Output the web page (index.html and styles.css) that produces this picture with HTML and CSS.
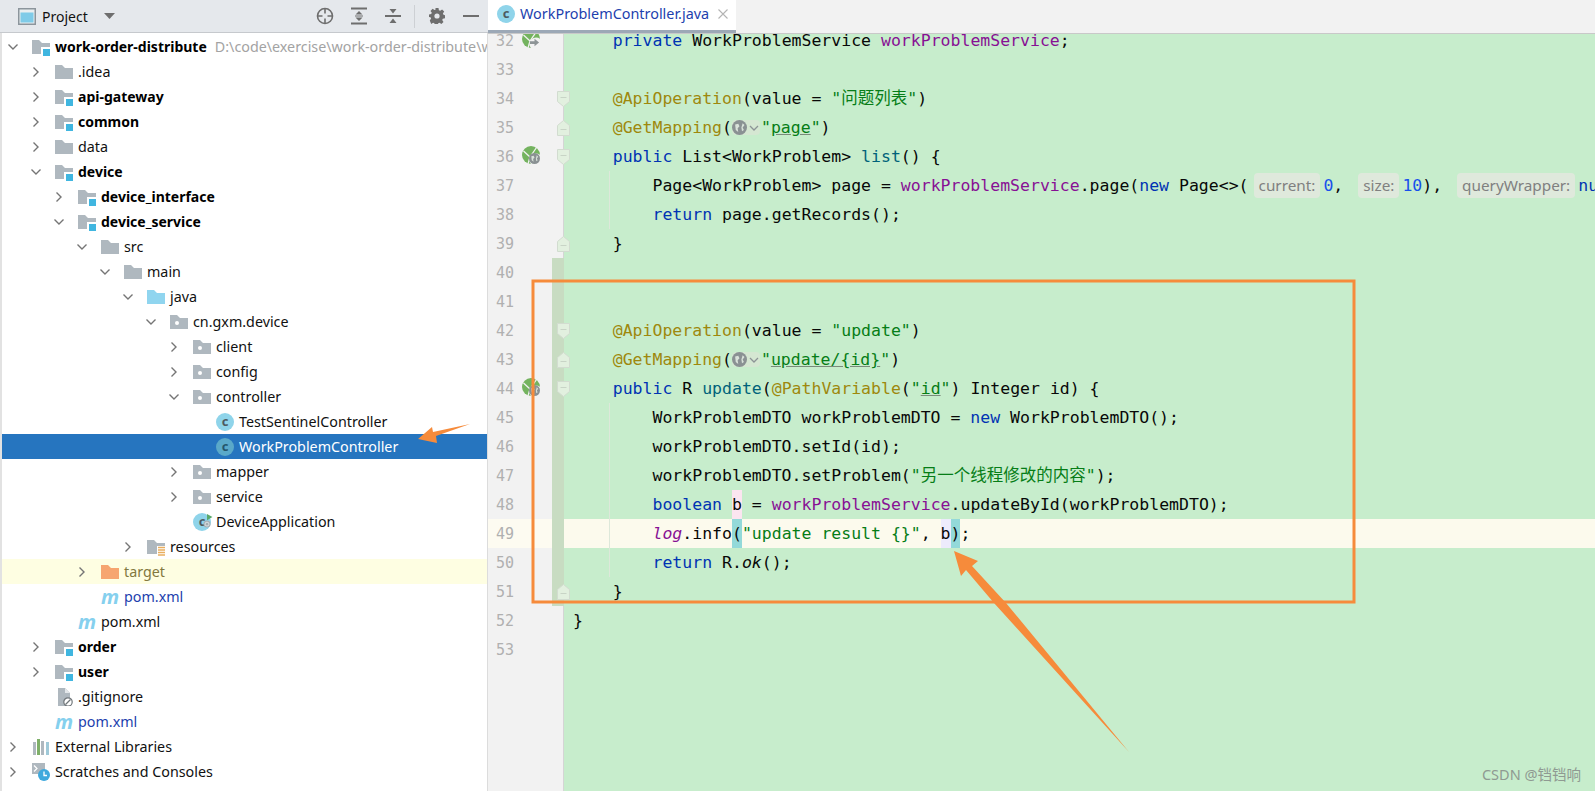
FILE: index.html
```html
<!DOCTYPE html>
<html lang="en">
<head>
    <meta charset="utf-8">
    <title>WorkProblemController.java</title>
    <link rel="stylesheet" href="styles.css">
</head>
<body>
    <!-- shared icons -->
    <svg class="defs" xmlns="http://www.w3.org/2000/svg">
        <symbol id="folder" viewBox="0 0 18 18"><path d="M0 2h7l3 3h8v11H0z" fill="#afb8bf"/></symbol>
        <symbol id="module" viewBox="0 0 18 18"><path d="M0 2h7l3 3h8v11H0z" fill="#afb8bf"/><rect x="9" y="9" width="10" height="10" fill="#fff"/><rect x="11" y="11" width="7" height="7" fill="#40b6e0"/></symbol>
        <symbol id="package" viewBox="0 0 18 18"><path d="M0 2h7l3 3h8v11H0z" fill="#afb8bf"/><circle cx="7" cy="10" r="2" fill="#fff"/></symbol>
        <symbol id="java" viewBox="0 0 18 18"><path d="M0 2h7l3 3h8v11H0z" fill="#90d5ef"/></symbol>
        <symbol id="target" viewBox="0 0 18 18"><path d="M0 2h7l3 3h8v11H0z" fill="#f6a570"/></symbol>
        <symbol id="resources" viewBox="0 0 18 18"><path d="M0 2h7l3 3h8v11H0z" fill="#afb8bf"/><rect x="10" y="8" width="9" height="10" fill="#fff"/><path d="M11 9.500h7M11 12h7M11 14.500h7M11 17h7" stroke="#e9ae5f" stroke-width="1.300"/></symbol>
        <symbol id="chev-r" viewBox="0 0 10 10"><path d="M2.500 .5 7 5 2.500 9.500" fill="none" stroke="#757575" stroke-width="1.400"/></symbol>
        <symbol id="chev-d" viewBox="0 0 10 10"><path d="M.5 2.500 5 7 9.500 2.500" fill="none" stroke="#757575" stroke-width="1.400"/></symbol>
        <symbol id="fold-start" viewBox="0 0 13 16"><path d="M.5.5h12v10l-6 5-6-5z" fill="#e2f0df" stroke="#d2dcd0"/><path d="M3.500 6.500h6" stroke="#c8d4c6"/></symbol>
        <symbol id="fold-end" viewBox="0 0 13 16"><path d="M.5 15.500h12v-10l-6-5-6 5z" fill="#e2f0df" stroke="#d2dcd0"/><path d="M3.500 9.500h6" stroke="#c8d4c6"/></symbol>
        <symbol id="spring" viewBox="0 0 18 18"><circle cx="9" cy="9" r="9" fill="#74b35f"/><path d="M1.500 5 8 11 14.500 1.500M8 11 6 18" fill="none" stroke="#f2f2f2" stroke-width="1.300"/><circle cx="14" cy="14" r="6.500" fill="#f2f2f2"/></symbol>
        <symbol id="globe" viewBox="0 0 12 12"><circle cx="6" cy="6" r="6" fill="#8a9193"/><path d="M2.500 3.500 5 3 6 5 4.500 6.500 5 9.500 3 8zM8.500 2.500 10 4 8.500 6l1 2-1.500 1-.5-3z" fill="#d9e2da"/></symbol>
    </svg>

    <div class="ide">
        <aside class="project">
            <div class="project-bar">
                <svg class="project-icon" viewBox="0 0 18 17"><rect x=".75" y=".75" width="16.500" height="15.500" fill="#e9eef0" stroke="#8c959c" stroke-width="1.500"/><rect x="2.500" y="4.500" width="13" height="10" fill="#7fcbe8"/></svg>
                <span class="project-title">Project</span>
                <svg class="project-caret" viewBox="0 0 11 6"><path d="M0 0h11L5.500 6z" fill="#6e6e6e"/></svg>
                <div class="bar-tools">
                    <svg class="tool" viewBox="0 0 18 18"><circle cx="9" cy="9" r="7.500" fill="none" stroke="#6e6e6e" stroke-width="1.600"/><path d="M9 1.500v5M9 11.500v5M1.500 9h5M11.500 9h5" stroke="#6e6e6e" stroke-width="1.600"/></svg>
                    <svg class="tool" viewBox="0 0 18 18"><path d="M1 1.500h16M1 16.500h16" stroke="#6e6e6e" stroke-width="2"/><path d="M9 4l3.500 3.500h-7zM9 14l3.500-3.500h-7z" fill="#6e6e6e"/><path d="M5 9h8" stroke="#6e6e6e"/></svg>
                    <svg class="tool" viewBox="0 0 18 18"><path d="M1 9h16" stroke="#6e6e6e" stroke-width="2"/><path d="M9 6.500 5.500 2h7zM9 11.500l3.500 4.500h-7z" fill="#6e6e6e"/></svg>
                    <span class="tool-sep"></span>
                    <svg class="tool gear" viewBox="0 0 16 16"><path d="M6.500 0h3l.4 2.200 1.300.6L13.100 1.500l2.100 2.100-1.300 1.900.6 1.300 1.500.5v3l-2.200.4-.6 1.300 1.300 1.900-2.100 2.100-1.900-1.300-1.300.6-.4 2.200h-3l-.4-2.200-1.300-.6-1.900 1.300L.8 12.400l1.300-1.900-.6-1.300L0 9V6.500l2.200-.4.6-1.300L1.500 2.900 3.600.8l1.900 1.300 1-.4z" fill="#6e6e6e"/><circle cx="8" cy="8" r="2.600" fill="#e5e8ec"/></svg>
                    <span class="tool-minus"></span>
                </div>
            </div>

            <ul class="tree">
                <li class="node lv0"><svg class="chev"><use href="#chev-d"/></svg><svg class="ico"><use href="#module"/></svg><b>work-order-distribute</b><span class="path">D:\code\exercise\work-order-distribute\work-order-distribute</span></li>
                <li class="node lv1"><svg class="chev"><use href="#chev-r"/></svg><svg class="ico"><use href="#folder"/></svg>.idea</li>
                <li class="node lv1"><svg class="chev"><use href="#chev-r"/></svg><svg class="ico"><use href="#module"/></svg><b>api-gateway</b></li>
                <li class="node lv1"><svg class="chev"><use href="#chev-r"/></svg><svg class="ico"><use href="#module"/></svg><b>common</b></li>
                <li class="node lv1"><svg class="chev"><use href="#chev-r"/></svg><svg class="ico"><use href="#folder"/></svg>data</li>
                <li class="node lv1"><svg class="chev"><use href="#chev-d"/></svg><svg class="ico"><use href="#module"/></svg><b>device</b></li>
                <li class="node lv2"><svg class="chev"><use href="#chev-r"/></svg><svg class="ico"><use href="#module"/></svg><b>device_interface</b></li>
                <li class="node lv2"><svg class="chev"><use href="#chev-d"/></svg><svg class="ico"><use href="#module"/></svg><b>device_service</b></li>
                <li class="node lv3"><svg class="chev"><use href="#chev-d"/></svg><svg class="ico"><use href="#folder"/></svg>src</li>
                <li class="node lv4"><svg class="chev"><use href="#chev-d"/></svg><svg class="ico"><use href="#folder"/></svg>main</li>
                <li class="node lv5"><svg class="chev"><use href="#chev-d"/></svg><svg class="ico"><use href="#java"/></svg>java</li>
                <li class="node lv6"><svg class="chev"><use href="#chev-d"/></svg><svg class="ico"><use href="#package"/></svg>cn.gxm.device</li>
                <li class="node lv7"><svg class="chev"><use href="#chev-r"/></svg><svg class="ico"><use href="#package"/></svg>client</li>
                <li class="node lv7"><svg class="chev"><use href="#chev-r"/></svg><svg class="ico"><use href="#package"/></svg>config</li>
                <li class="node lv7"><svg class="chev"><use href="#chev-d"/></svg><svg class="ico"><use href="#package"/></svg>controller</li>
                <li class="node lv8"><span class="chev"></span><span class="cls">c</span>TestSentinelController</li>
                <li class="node lv8 selected"><span class="chev"></span><span class="cls">c</span>WorkProblemController</li>
                <li class="node lv7"><svg class="chev"><use href="#chev-r"/></svg><svg class="ico"><use href="#package"/></svg>mapper</li>
                <li class="node lv7"><svg class="chev"><use href="#chev-r"/></svg><svg class="ico"><use href="#package"/></svg>service</li>
                <li class="node lv7"><span class="chev"></span><span class="cls app">c<svg class="app-badge" viewBox="0 0 18 18"><path d="M9 0l7 4-7 4z" fill="#59a869"/><circle cx="9" cy="13" r="4.500" fill="#a5adb3"/><circle cx="9" cy="13" r="2.500" fill="none" stroke="#e8eef0"/></svg></span>DeviceApplication</li>
                <li class="node lv5"><svg class="chev"><use href="#chev-r"/></svg><svg class="ico"><use href="#resources"/></svg>resources</li>
                <li class="node lv3 excluded"><svg class="chev"><use href="#chev-r"/></svg><svg class="ico"><use href="#target"/></svg>target</li>
                <li class="node lv3 changed-file"><span class="chev"></span><span class="mvn">m</span>pom.xml</li>
                <li class="node lv2"><span class="chev"></span><span class="mvn">m</span>pom.xml</li>
                <li class="node lv1"><svg class="chev"><use href="#chev-r"/></svg><svg class="ico"><use href="#module"/></svg><b>order</b></li>
                <li class="node lv1"><svg class="chev"><use href="#chev-r"/></svg><svg class="ico"><use href="#module"/></svg><b>user</b></li>
                <li class="node lv1"><span class="chev"></span><svg class="ico" viewBox="0 0 18 18"><path d="M3 0h7l5 5v13H3z" fill="#afb8bf"/><path d="M10 0v5h5" fill="#e3e7ea"/><circle cx="13" cy="14" r="4.200" fill="#fff" stroke="#70767a" stroke-width="1.200"/><path d="M10.500 16.500l5-5" stroke="#70767a" stroke-width="1.200"/></svg>.gitignore</li>
                <li class="node lv1 changed-file"><span class="chev"></span><span class="mvn">m</span>pom.xml</li>
                <li class="node lv0"><svg class="chev"><use href="#chev-r"/></svg><svg class="ico" viewBox="0 0 18 18"><rect x="1" y="4" width="3" height="13" fill="#afb8bf"/><rect x="5" y="1" width="3" height="16" fill="#7fb069"/><rect x="9" y="3" width="3" height="14" fill="#afb8bf"/><rect x="14" y="4" width="3" height="13" fill="#9fc9d8"/></svg>External Libraries</li>
                <li class="node lv0"><svg class="chev"><use href="#chev-r"/></svg><svg class="ico" viewBox="0 0 18 18"><rect x="0" y="0" width="13" height="11" fill="#afb8bf"/><path d="M2 2.500l3 3-3 3" fill="none" stroke="#fff" stroke-width="1.200"/><circle cx="12" cy="12" r="6" fill="#3fa9dd"/><path d="M12 8.500V12.500h3" fill="none" stroke="#fff" stroke-width="1.300"/></svg>Scratches and Consoles</li>
            </ul>
        </aside>

        <main class="editor">
            <div class="tabs">
                <div class="tab">
                    <span class="cls">c</span>
                    <span class="tab-name">WorkProblemController.java</span>
                    <svg class="tab-close" viewBox="0 0 10 10"><path d="M.5.5l9 9M9.500.5l-9 9" stroke="#b4b4b4" stroke-width="1.100"/></svg>
                </div>
            </div>

            <div class="lines">
                <div class="row"><div class="gutter"><span class="num">32</span><span class="bean"><svg class="leaf"><use href="#spring"/></svg><svg class="bean-badge" viewBox="0 0 12 12"><path d="M1 4.500h5V2l5 4-5 4V7.500H1z" fill="#8d9496"/></svg></span></div><div class="code">    <span class="k">private</span> WorkProblemService <span class="f">workProblemService</span>;</div></div>
                <div class="row"><div class="gutter"><span class="num">33</span></div><div class="code"></div></div>
                <div class="row"><div class="gutter"><span class="num">34</span><svg class="fold"><use href="#fold-start"/></svg></div><div class="code">    <span class="a">@ApiOperation</span>(value = <span class="s">"<span class="cjk">问题列表</span>"</span>)</div></div>
                <div class="row"><div class="gutter"><span class="num">35</span><svg class="fold"><use href="#fold-end"/></svg></div><div class="code">    <span class="a">@GetMapping</span>(<span class="url-hint"><svg class="url-globe"><use href="#globe"/></svg><svg class="url-chev" viewBox="0 0 10 10"><path d="M1 3l4 4 4-4" fill="none" stroke="#8d9496" stroke-width="1.300"/></svg></span><span class="s">"<span class="u">page</span>"</span>)</div></div>
                <div class="row"><div class="gutter"><span class="num">36</span><span class="bean"><svg class="leaf"><use href="#spring"/></svg><svg class="bean-badge"><use href="#globe"/></svg></span><svg class="fold"><use href="#fold-start"/></svg></div><div class="code">    <span class="k">public</span> List&lt;WorkProblem&gt; <span class="m">list</span>() {</div></div>
                <div class="row"><div class="gutter"><span class="num">37</span></div><div class="code guide">        Page&lt;WorkProblem&gt; page = <span class="f">workProblemService</span>.page(<span class="k">new</span> Page&lt;&gt;(<span class="hint">current:</span><span class="n">0</span>, <span class="hint">size:</span><span class="n">10</span>), <span class="hint">queryWrapper:</span><span class="k">null</span>);</div></div>
                <div class="row"><div class="gutter"><span class="num">38</span></div><div class="code guide">        <span class="k">return</span> page.getRecords();</div></div>
                <div class="row"><div class="gutter"><span class="num">39</span><svg class="fold"><use href="#fold-end"/></svg></div><div class="code">    }</div></div>
                <div class="row"><div class="gutter changed"><span class="num">40</span></div><div class="code"></div></div>
                <div class="row"><div class="gutter changed"><span class="num">41</span></div><div class="code"></div></div>
                <div class="row"><div class="gutter changed"><span class="num">42</span><svg class="fold"><use href="#fold-start"/></svg></div><div class="code">    <span class="a">@ApiOperation</span>(value = <span class="s">"update"</span>)</div></div>
                <div class="row"><div class="gutter changed"><span class="num">43</span><svg class="fold"><use href="#fold-end"/></svg></div><div class="code">    <span class="a">@GetMapping</span>(<span class="url-hint"><svg class="url-globe"><use href="#globe"/></svg><svg class="url-chev" viewBox="0 0 10 10"><path d="M1 3l4 4 4-4" fill="none" stroke="#8d9496" stroke-width="1.300"/></svg></span><span class="s">"<span class="u">update/{id}</span>"</span>)</div></div>
                <div class="row"><div class="gutter changed"><span class="num">44</span><span class="bean"><svg class="leaf"><use href="#spring"/></svg><svg class="bean-badge"><use href="#globe"/></svg></span><svg class="fold"><use href="#fold-start"/></svg></div><div class="code">    <span class="k">public</span> R <span class="m">update</span>(<span class="a">@PathVariable</span>(<span class="s">"<span class="u">id</span>"</span>) Integer id) {</div></div>
                <div class="row"><div class="gutter changed"><span class="num">45</span></div><div class="code guide">        WorkProblemDTO workProblemDTO = <span class="k">new</span> WorkProblemDTO();</div></div>
                <div class="row"><div class="gutter changed"><span class="num">46</span></div><div class="code guide">        workProblemDTO.setId(id);</div></div>
                <div class="row"><div class="gutter changed"><span class="num">47</span></div><div class="code guide">        workProblemDTO.setProblem(<span class="s">"<span class="cjk">另一个线程修改的内容</span>"</span>);</div></div>
                <div class="row"><div class="gutter changed"><span class="num">48</span></div><div class="code guide">        <span class="k">boolean</span> <span class="write">b</span> = <span class="f">workProblemService</span>.updateById(workProblemDTO);</div></div>
                <div class="row caret"><div class="gutter changed"><span class="num">49</span></div><div class="code guide">        <span class="f"><i>log</i></span>.info<span class="brace">(</span><span class="s">"update result {}"</span>, <span class="read">b</span><span class="brace">)</span>;</div></div>
                <div class="row"><div class="gutter changed"><span class="num">50</span></div><div class="code guide">        <span class="k">return</span> R.<i>ok</i>();</div></div>
                <div class="row"><div class="gutter changed"><span class="num">51</span><svg class="fold"><use href="#fold-end"/></svg></div><div class="code">    }</div></div>
                <div class="row"><div class="gutter"><span class="num">52</span></div><div class="code">}</div></div>
                <div class="row"><div class="gutter"><span class="num">53</span></div><div class="code"></div></div>
            </div>
        </main>
    </div>

    <!-- orange markup drawn on top of the screenshot -->
    <svg class="markup" viewBox="0 0 1595 791" xmlns="http://www.w3.org/2000/svg">
        <rect x="533" y="281" width="821" height="321" fill="none" stroke="#f68b3b" stroke-width="3"/>
        <path d="M954 551 978 561 972 566 1006 603 1129 752 994 603 966 570 961 576z" fill="#f68b3b"/>
        <path d="M418 439 432 427 433 432 470 424 436 436 437 443z" fill="#f68b3b"/>
    </svg>
    <div class="watermark">CSDN @铛铛响</div>
</body>
</html>
```

FILE: styles.css
```css
/* IDE window */
html,
body {
    margin: 0;
    padding: 0;
    height: 791px;
    overflow: hidden;
}

body {
    font-family: "Noto Sans", "Noto Sans CJK SC", sans-serif;
    font-size: 14px;
    color: #111;
    position: relative;
}

.defs {
    position: absolute;
    width: 0;
    height: 0;
}

.ide {
    display: flex;
    height: 791px;
}

/* project panel */
.project {
    width: 488px;
    flex: none;
    box-sizing: border-box;
    border-left: 2px solid #e2e2e2;
    border-right: 1px solid #dcdcdc;
    background-color: #fff;
}

.project-bar {
    display: flex;
    align-items: center;
    height: 33px;
    box-sizing: border-box;
    margin-left: -2px;
    margin-right: -1px;
    padding-left: 18px;
    background-color: #e5e8ec;
    border-bottom: 1px solid #c6c9cd;
}

.project-icon {
    width: 18px;
    height: 17px;
    margin-right: 6px;
}

.project-title {
    width: 62px;
}

.project-caret {
    width: 11px;
    height: 6px;
}

.bar-tools {
    display: flex;
    align-items: center;
    margin-left: 201px;
}

.tool {
    width: 18px;
    height: 18px;
    margin-right: 16px;
}

.tool-sep {
    width: 1px;
    height: 23px;
    margin: 0 14px 0 -4px;
    background-color: #cdd0d4;
}

.gear {
    width: 16px;
    height: 16px;
    margin-right: 18px;
}

.tool-minus {
    width: 16px;
    height: 2px;
    background-color: #6e6e6e;
}

.tree {
    list-style: none;
    margin: 1px 0 0;
    padding: 0;
    font-size: 14.3px;
}

.node {
    display: flex;
    align-items: center;
    height: 25px;
    white-space: nowrap;
    overflow: hidden;
}

.node b {
    font-size: 14px;
    font-weight: 700;
    color: #000;
}

.lv0 { padding-left: 6px; }
.lv1 { padding-left: 29px; }
.lv2 { padding-left: 52px; }
.lv3 { padding-left: 75px; }
.lv4 { padding-left: 98px; }
.lv5 { padding-left: 121px; }
.lv6 { padding-left: 144px; }
.lv7 { padding-left: 167px; }
.lv8 { padding-left: 190px; }

.chev {
    width: 10px;
    height: 10px;
    flex: none;
    margin-right: 14px;
}

.ico {
    width: 18px;
    height: 18px;
    flex: none;
    margin-right: 5px;
}

.path {
    margin-left: 8px;
    color: #a3a3a3;
}

.cls {
    position: relative;
    display: inline-block;
    width: 18px;
    height: 18px;
    flex: none;
    margin-right: 5px;
    border-radius: 50%;
    background-color: #8fd4ea;
    color: #4d5a60;
    font-size: 13px;
    font-weight: 700;
    line-height: 16px;
    text-align: center;
}

.app-badge {
    position: absolute;
    left: 7px;
    top: -3px;
    width: 14px;
    height: 22px;
}

.mvn {
    width: 18px;
    flex: none;
    margin-right: 5px;
    color: #85d0ee;
    font-family: "Noto Sans", sans-serif;
    font-size: 20px;
    font-style: italic;
    font-weight: 700;
    line-height: 18px;
    letter-spacing: -1px;
}

.selected {
    background-color: #2675bf;
    color: #fff;
}

.selected .cls {
    background-color: #5aa9c9;
    color: #24566b;
}

.excluded {
    background-color: #fefee2;
    color: #82783f;
}

.changed-file {
    color: #1d3fae;
}

/* editor */
.editor {
    flex: 1;
    min-width: 0;
    display: flex;
    flex-direction: column;
    background-color: #c7edcc;
}

.tabs {
    height: 34px;
    flex: none;
    box-sizing: border-box;
    background-color: #f2f2f2;
    border-bottom: 1px solid #c9c9c9;
}

.tab {
    display: flex;
    align-items: center;
    width: 248px;
    height: 33px;
    box-sizing: border-box;
    padding: 0 0 3px 9px;
    background-color: #fff;
    border-bottom: 3px solid #9ca8b6;
}

.tab .cls {
    margin-right: 5px;
}

.tab-name {
    color: #1d3fae;
    font-size: 14.4px;
}

.tab-close {
    width: 10px;
    height: 10px;
    margin-left: 9px;
}

.lines {
    flex: 1;
    overflow: hidden;
    background: linear-gradient(to right, #f2f2f2 75px, #d5d5d5 75px, #d5d5d5 76px, #c7edcc 76px);
}

.row {
    display: flex;
    height: 29px;
}

.row:first-child {
    margin-top: -8px;
}

.gutter {
    position: relative;
    width: 75px;
    flex: none;
    background-color: #f2f2f2;
    border-right: 1px solid #d5d5d5;
}

.changed::after {
    content: "";
    position: absolute;
    right: -1px;
    top: 0;
    bottom: 0;
    width: 12px;
    background-color: #c8dcc2;
}

.num {
    display: block;
    width: 26px;
    color: #b0b0b0;
    font-family: "DejaVu Sans Mono", monospace;
    font-size: 15px;
    line-height: 30px;
    text-align: right;
}

.bean {
    position: absolute;
    left: 34px;
    top: 4px;
    width: 18px;
    height: 18px;
}

.leaf {
    position: absolute;
    left: 0;
    top: 0;
    width: 18px;
    height: 18px;
}

.bean-badge {
    position: absolute;
    left: 7px;
    top: 7px;
    width: 11px;
    height: 11px;
}

.fold {
    position: absolute;
    z-index: 1;
    left: 69px;
    top: 7px;
    width: 13px;
    height: 16px;
}

.code {
    position: relative;
    flex: 1;
    min-width: 0;
    padding-left: 9px;
    color: #080808;
    font-family: "DejaVu Sans Mono", "Noto Sans CJK SC", monospace;
    font-size: 16.5px;
    line-height: 29px;
    white-space: pre;
}

.guide::before {
    content: "";
    position: absolute;
    left: 45px;
    top: 0;
    bottom: 0;
    width: 1px;
    background-color: #dde8da;
}

.caret .code {
    background-color: #fcfaed;
}

.caret .gutter {
    background-color: #fdfbf1;
}

/* syntax colours */
.k { color: #0033b3; }
.a { color: #9e880d; }
.s { color: #067d17; }
.f { color: #871094; }
.m { color: #00627a; }
.n { color: #1750eb; }

.u {
    text-decoration: underline;
    text-decoration-color: #7a8a7a;
}

.cjk {
    font-family: "Noto Sans CJK SC", sans-serif;
    line-height: 1;
}

.hint {
    display: inline-block;
    height: 25px;
    margin: 0 3px 0 5px;
    padding: 0 5px;
    border-radius: 4px;
    background-color: #dfe9dc;
    color: #808080;
    font-family: "Noto Sans", sans-serif;
    font-size: 15.3px;
    line-height: 25px;
}

.url-hint {
    display: inline-flex;
    align-items: center;
    width: 28px;
    height: 15px;
    margin-right: 1px;
    border-radius: 4px;
    background-color: #d5e7d2;
    vertical-align: -2px;
}

.url-globe {
    width: 15px;
    height: 15px;
}

.url-chev {
    width: 10px;
    height: 10px;
    margin-left: 2px;
}

.write,
.read,
.brace {
    display: inline-block;
}

.write { background-color: #fbe5f0; }
.read { background-color: #edebfc; }
.brace { background-color: #93d9d9; }

/* overlays */
.markup {
    position: absolute;
    left: 0;
    top: 0;
    width: 1595px;
    height: 791px;
    pointer-events: none;
}

.watermark {
    position: absolute;
    right: 14px;
    bottom: 7px;
    color: #8f9a92;
    font-family: "Noto Sans", "Noto Sans CJK SC", sans-serif;
    font-size: 14.5px;
}
```
